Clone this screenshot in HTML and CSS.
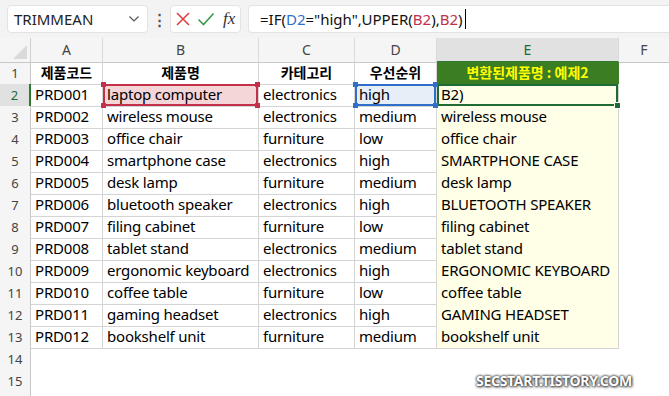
FILE: index.html
```html
<!DOCTYPE html>
<html>

<head>
    <link rel="stylesheet" href="styles.css">
</head>

<body>

    <div class="toolbar">
        <div class="name-box">
            <span>TRIMMEAN</span>
            <svg class="chev" width="12" height="8" viewBox="0 0 12 8"><path d="M1.5 1.5 L6 6 L10.5 1.5" fill="none" stroke="#555" stroke-width="1.2"/></svg>
        </div>
        <div class="dots">⋮</div>
        <div class="fx-box">
            <svg width="16" height="16" viewBox="0 0 16 16"><path d="M2 2 L14 14 M14 2 L2 14" stroke="#e0393e" stroke-width="1.5"/></svg>
            <svg width="18" height="16" viewBox="0 0 18 16"><path d="M1.5 8.5 L6.5 13.5 L16.5 2.5" fill="none" stroke="#3a9a4a" stroke-width="1.6"/></svg>
            <span class="fx">fx</span>
        </div>
        <div class="formula">
            =IF(<span class="ref-d">D2</span>="high",UPPER(<span class="ref-b">B2</span>),<span class="ref-b">B2</span>)<span class="caret"></span>
        </div>
    </div>

    <div class="sheet">
        <div class="row col-head">
            <div class="corner"></div>
            <div class="ch">A</div>
            <div class="ch">B</div>
            <div class="ch">C</div>
            <div class="ch">D</div>
            <div class="ch ch-active">E</div>
            <div class="ch ch-last">F</div>
        </div>

        <div class="row">
            <div class="rh">1</div>
            <div class="c th">제품코드</div>
            <div class="c th">제품명</div>
            <div class="c th">카테고리</div>
            <div class="c th">우선순위</div>
            <div class="c th th-result">변환된제품명 : 예제2</div>
            <div></div>
        </div>
        <div class="row">
            <div class="rh rh-active">2</div>
            <div class="c">PRD001</div>
            <div class="c sel-red">laptop computer<i class="h tl"></i><i class="h tr"></i><i class="h bl"></i><i class="h br"></i></div>
            <div class="c">electronics</div>
            <div class="c sel-blue">high<i class="h tl"></i><i class="h tr"></i><i class="h bl"></i><i class="h br"></i></div>
            <div class="c y active">B2)<i class="fill"></i></div>
            <div></div>
        </div>
        <div class="row">
            <div class="rh">3</div>
            <div class="c">PRD002</div>
            <div class="c">wireless mouse</div>
            <div class="c">electronics</div>
            <div class="c">medium</div>
            <div class="c y">wireless mouse</div>
            <div></div>
        </div>
        <div class="row">
            <div class="rh">4</div>
            <div class="c">PRD003</div>
            <div class="c">office chair</div>
            <div class="c">furniture</div>
            <div class="c">low</div>
            <div class="c y">office chair</div>
            <div></div>
        </div>
        <div class="row">
            <div class="rh">5</div>
            <div class="c">PRD004</div>
            <div class="c">smartphone case</div>
            <div class="c">electronics</div>
            <div class="c">high</div>
            <div class="c y">SMARTPHONE CASE</div>
            <div></div>
        </div>
        <div class="row">
            <div class="rh">6</div>
            <div class="c">PRD005</div>
            <div class="c">desk lamp</div>
            <div class="c">furniture</div>
            <div class="c">medium</div>
            <div class="c y">desk lamp</div>
            <div></div>
        </div>
        <div class="row">
            <div class="rh">7</div>
            <div class="c">PRD006</div>
            <div class="c">bluetooth speaker</div>
            <div class="c">electronics</div>
            <div class="c">high</div>
            <div class="c y">BLUETOOTH SPEAKER</div>
            <div></div>
        </div>
        <div class="row">
            <div class="rh">8</div>
            <div class="c">PRD007</div>
            <div class="c">filing cabinet</div>
            <div class="c">furniture</div>
            <div class="c">low</div>
            <div class="c y">filing cabinet</div>
            <div></div>
        </div>
        <div class="row">
            <div class="rh">9</div>
            <div class="c">PRD008</div>
            <div class="c">tablet stand</div>
            <div class="c">electronics</div>
            <div class="c">medium</div>
            <div class="c y">tablet stand</div>
            <div></div>
        </div>
        <div class="row">
            <div class="rh">10</div>
            <div class="c">PRD009</div>
            <div class="c">ergonomic keyboard</div>
            <div class="c">electronics</div>
            <div class="c">high</div>
            <div class="c y">ERGONOMIC KEYBOARD</div>
            <div></div>
        </div>
        <div class="row">
            <div class="rh">11</div>
            <div class="c">PRD010</div>
            <div class="c">coffee table</div>
            <div class="c">furniture</div>
            <div class="c">low</div>
            <div class="c y">coffee table</div>
            <div></div>
        </div>
        <div class="row">
            <div class="rh">12</div>
            <div class="c">PRD011</div>
            <div class="c">gaming headset</div>
            <div class="c">electronics</div>
            <div class="c">high</div>
            <div class="c y">GAMING HEADSET</div>
            <div></div>
        </div>
        <div class="row">
            <div class="rh">13</div>
            <div class="c">PRD012</div>
            <div class="c">bookshelf unit</div>
            <div class="c">furniture</div>
            <div class="c">medium</div>
            <div class="c y">bookshelf unit</div>
            <div></div>
        </div>
        <div class="row">
            <div class="rh">14</div>
        </div>
        <div class="row">
            <div class="rh">15</div>
        </div>
        <div class="row">
            <div class="rh"></div>
        </div>

        <div class="watermark">SECSTART.TISTORY.COM</div>
    </div>

</body>

</html>
```

FILE: styles.css
```css
body {
    margin: 0;
    background: #fff;
    font-family: "Noto Sans", "Noto Sans CJK KR", sans-serif;
    color: #000;
    overflow: hidden;
}

/* 상단 수식 입력줄 */
.toolbar {
    height: 38px;
    background: #f3f3f3;
    display: flex;
    align-items: flex-start;
    padding-top: 5px;
    box-sizing: border-box;
}

.name-box {
    margin-left: 7px;
    width: 141px;
    height: 28px;
    background: #fff;
    border: 1px solid #e3e3e3;
    border-radius: 4px;
    box-sizing: border-box;
    display: flex;
    align-items: center;
    justify-content: space-between;
    padding: 0 7px 0 6px;
    font-size: 15px;
    color: #222;
}

.dots {
    width: 22px;
    text-align: center;
    font-size: 15px;
    line-height: 28px;
    color: #555;
    font-weight: bold;
}

.fx-box {
    width: 71px;
    height: 28px;
    background: #fff;
    border: 1px solid #e3e3e3;
    border-radius: 4px;
    box-sizing: border-box;
    display: flex;
    align-items: center;
    gap: 6px;
    padding-left: 4px;
}

.fx {
    font-family: "Liberation Serif", serif;
    font-style: italic;
    font-size: 17px;
    color: #333;
    margin-left: 2px;
}

.formula {
    margin-left: 7px;
    flex: 1;
    height: 28px;
    background: #fff;
    border: 1px solid #e3e3e3;
    border-right: none;
    border-radius: 4px 0 0 4px;
    box-sizing: border-box;
    padding-left: 11px;
    font-size: 15px;
    line-height: 26px;
    color: #111;
    white-space: nowrap;
}

.ref-d {
    color: #2f6fc9;
}

.ref-b {
    color: #c2304a;
}

.caret {
    display: inline-block;
    width: 1px;
    height: 20px;
    background: #000;
    vertical-align: -4px;
    margin-left: 2px;
}

/* 시트 */
.sheet {
    position: relative;
}

.row {
    display: grid;
    grid-template-columns: 31px 72px 156px 96px 82px 182px 1fr;
    height: 22px;
}

.col-head {
    height: 24px;
    background: #f5f5f5;
}

.corner {
    border-right: 1px solid #d0d0d0;
    border-bottom: 1px solid #c8c8c8;
    position: relative;
}

.corner::after {
    content: "";
    position: absolute;
    right: 3px;
    bottom: 3px;
    border-left: 14px solid transparent;
    border-bottom: 14px solid #dadada;
}

.ch {
    border-right: 1px solid #d9d9d9;
    border-bottom: 1px solid #c8c8c8;
    text-align: center;
    font-size: 14px;
    line-height: 23px;
    color: #444;
}

.ch-active {
    background: #e1e1e1;
    color: #1e6b34;
    border-bottom: 2px solid #2d7a2f;
}

.ch-last {
    border-right: none;
}

.rh {
    background: #f5f5f5;
    border-right: 1px solid #c8c8c8;
    border-bottom: 1px solid #e2e2e2;
    text-align: center;
    font-size: 13px;
    line-height: 22px;
    color: #444;
    box-sizing: border-box;
}

.rh-active {
    background: #e1e1e1;
    color: #1e6b34;
    border-right: 2px solid #2d7a2f;
}

.c {
    border-right: 1px solid #d4d4d4;
    border-bottom: 1px solid #d4d4d4;
    font-size: 15px;
    line-height: 21px;
    padding-left: 4px;
    letter-spacing: -0.2px;
    white-space: nowrap;
    overflow: hidden;
    position: relative;
}

.th {
    font-family: "Noto Sans CJK KR", sans-serif;
    font-weight: bold;
    font-size: 14px;
    letter-spacing: 0;
    text-align: center;
    padding-left: 0;
}

.th-result {
    background: #3b7d23;
    color: #ffff00;
    border-right-color: #3b7d23;
}

.y {
    background: #fffee6;
}

/* 참조 셀 표시 */
.sel-red {
    background: #f4d5d8;
    box-shadow: inset 0 0 0 2px #c2304a;
    overflow: visible;
}

.sel-blue {
    background: #e8eef8;
    box-shadow: inset 0 0 0 2px #2f6fc9;
    overflow: visible;
}

.h {
    position: absolute;
    width: 5px;
    height: 5px;
    z-index: 2;
}

.sel-red .h {
    background: #c2304a;
}

.sel-blue .h {
    background: #2f6fc9;
}

.tl { left: -2px; top: -2px; }
.tr { right: -2px; top: -2px; }
.bl { left: -2px; bottom: -2px; }
.br { right: -2px; bottom: -2px; }

.active {
    box-shadow: inset 0 0 0 2px #1e6b34;
    overflow: visible;
}

.fill {
    position: absolute;
    right: -3px;
    bottom: -3px;
    width: 5px;
    height: 5px;
    background: #1e6b34;
    border: 1px solid #fff;
    z-index: 2;
}

.watermark {
    position: absolute;
    left: 476px;
    top: 333px;
    font-family: "Noto Sans", sans-serif;
    font-weight: bold;
    font-size: 14px;
    letter-spacing: -0.3px;
    color: #fff;
    text-shadow: 0 0 2px #333, 0 0 3px #333, 1px 1px 3px #555;
}
```
